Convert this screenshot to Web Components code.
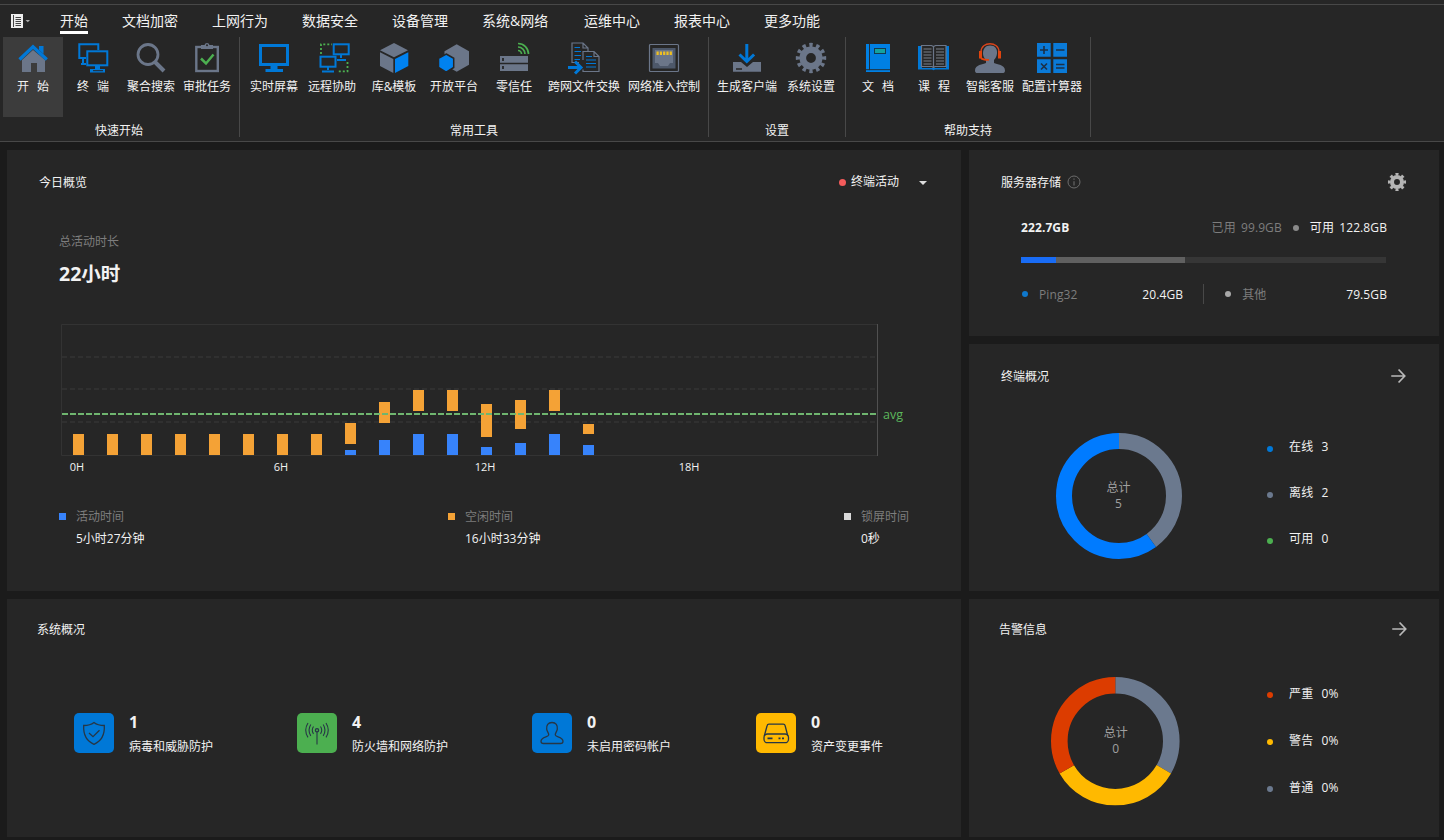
<!DOCTYPE html>
<html lang="zh-CN">
<head>
<meta charset="UTF-8">
<title>控制台</title>
<style>
    body {
        margin: 0;
        width: 1444px;
        height: 840px;
        overflow: hidden;
        background: #1b1b1b;
        color: #f2f2f2;
        font: 12px/16px "Open Sans", "Noto Sans CJK SC", sans-serif;
    }

    main {
        display: grid;
        grid-template-columns: 954px 470px;
        gap: 8px;
        padding: 8px 5px 3px 7px;
    }

    .column {
        display: flex;
        flex-direction: column;
        gap: 8px;
    }

    .stats {
        display: grid;
        grid-template-columns: 223px 235px 224px 1fr;
        padding: 76px 0 0 67px;
    }
</style>
</head>
<body>
<app-ribbon>
    <menu-tab slot="tabs" active>开始</menu-tab>
    <menu-tab slot="tabs">文档加密</menu-tab>
    <menu-tab slot="tabs">上网行为</menu-tab>
    <menu-tab slot="tabs">数据安全</menu-tab>
    <menu-tab slot="tabs">设备管理</menu-tab>
    <menu-tab slot="tabs" style="width:68px">系统&amp;网络</menu-tab>
    <menu-tab slot="tabs">运维中心</menu-tab>
    <menu-tab slot="tabs">报表中心</menu-tab>
    <menu-tab slot="tabs">更多功能</menu-tab>

    <ribbon-group label="快速开始" style="--right:4px">
        <ribbon-tool icon="home" width="60" active>开 始</ribbon-tool>
        <ribbon-tool icon="terminals" width="60">终 端</ribbon-tool>
        <ribbon-tool icon="search" width="56">聚合搜索</ribbon-tool>
        <ribbon-tool icon="approve" width="56">审批任务</ribbon-tool>
    </ribbon-group>
    <ribbon-group label="常用工具" style="--left:4px">
        <ribbon-tool icon="screen" width="60">实时屏幕</ribbon-tool>
        <ribbon-tool icon="remote" width="56">远程协助</ribbon-tool>
        <ribbon-tool icon="cube" width="68">库&amp;模板</ribbon-tool>
        <ribbon-tool icon="platform" width="52">开放平台</ribbon-tool>
        <ribbon-tool icon="trust" width="68">零信任</ribbon-tool>
        <ribbon-tool icon="exchange" width="72">跨网文件交换</ribbon-tool>
        <ribbon-tool icon="port" width="88">网络准入控制</ribbon-tool>
    </ribbon-group>
    <ribbon-group label="设置" style="--right:8px" wide>
        <ribbon-tool icon="install" width="76">生成客户端</ribbon-tool>
        <ribbon-tool icon="gear" width="52">系统设置</ribbon-tool>
    </ribbon-group>
    <ribbon-group label="帮助支持" style="--left:4px;--right:4px">
        <ribbon-tool icon="book" width="56">文 档</ribbon-tool>
        <ribbon-tool icon="course" width="56">课 程</ribbon-tool>
        <ribbon-tool icon="service" width="56">智能客服</ribbon-tool>
        <ribbon-tool icon="calc" width="68">配置计算器</ribbon-tool>
    </ribbon-group>
</app-ribbon>

<main>
    <div class="column">
        <dash-card heading="今日概览" style="--h:441px;--x:32px;--y:24px;--r:32px">
            <activity-filter slot="action">终端活动</activity-filter>
            <activity-chart></activity-chart>
        </dash-card>
        <dash-card heading="系统概况" style="--h:238px;--x:30px;--y:22px">
            <div class="stats">
                <stat-item icon="shield" color="#0078d7" value="1">病毒和威胁防护</stat-item>
                <stat-item icon="antenna" color="#4caf50" value="4">防火墙和网络防护</stat-item>
                <stat-item icon="user" color="#0078d7" value="0">未启用密码帐户</stat-item>
                <stat-item icon="disk" color="#ffb900" value="0">资产变更事件</stat-item>
            </div>
        </dash-card>
    </div>
    <div class="column">
        <dash-card heading="服务器存储" info style="--h:186px;--x:32px;--y:24px;--r:32px">
            <ui-icon slot="action" name="cog" size="20"></ui-icon>
            <storage-usage></storage-usage>
        </dash-card>
        <dash-card heading="终端概况" style="--h:247px;--x:32px;--y:24px;--r:32px">
            <ui-icon slot="action" name="arrow" size="18"></ui-icon>
            <donut-panel total="5" radius="63" hole="47" left="86.5" top="48.500" pitch="46" gap="85.5" shift="2" lift="5"
                parts='[["#6b798e",40],["#007bff",60]]'
                items='[["#0078d7","在线","3"],["#6b798e","离线","2"],["#4caf50","可用","0"]]'></donut-panel>
        </dash-card>
        <dash-card heading="告警信息" style="--h:238px;--x:30px;--y:22px">
            <ui-icon slot="action" name="arrow" size="18"></ui-icon>
            <donut-panel total="0" radius="64.3" hole="47.7" left="82.4" top="40" pitch="47" gap="87" shift="1" lift="0"
                parts='[["#6b798e",33.33],["#ffb900",33.33],["#dc3c00",33.34]]'
                items='[["#dc3c00","严重","0%"],["#ffb900","警告","0%"],["#6b798e","普通","0%"]]'></donut-panel>
        </dash-card>
    </div>
</main>

<script>
    const BLUE = '#0078d7';
    const GRAY = '#6b7689';
    const GREEN = '#4caf50';
    const DARK = '#262626';

    // 图标统一使用 32x32 画布
    const ICONS = {
        home: `<path d="M5 18 16 8l12 10v12h-8v-9h-6v9H5z" fill="${GRAY}"/><path d="M22 4h4.500v8l-4.500-4z" fill="${BLUE}"/><path d="M2.500 17.500 16 4.800l13.800 12.700" fill="none" stroke="${BLUE}" stroke-width="3.200"/>`,
        terminals: `<g fill="none" stroke="${BLUE}" stroke-width="2"><path d="M9 16H2.300V2.300h19V8"/><rect x="10.300" y="9.300" width="20" height="14"/><path d="M6 16v5m-2 1h5"/></g><path d="M18 23h5v4h5v3.500H13V27h5z" fill="${BLUE}"/><path d="M16 28.700h10" stroke="${DARK}"/>`,
        search: `<circle cx="13" cy="12.500" r="10" fill="none" stroke="${GRAY}" stroke-width="2.800"/><path d="m20 20 9 9" stroke="${GRAY}" stroke-width="4"/>`,
        approve: `<rect x="5.300" y="5" width="21.500" height="24" fill="none" stroke="${GRAY}" stroke-width="2.400"/><path d="M10 3h3.500q.5-2 2.500-2t2.500 2H22v4H10z" fill="${GRAY}"/><circle cx="16" cy="3.300" r="1" fill="${DARK}"/><path d="m10 16.500 5 5 7.500-9" fill="none" stroke="${GREEN}" stroke-width="2.500"/>`,
        screen: `<rect x="2.500" y="3.500" width="27" height="19" fill="none" stroke="${BLUE}" stroke-width="3"/><path d="M12.500 23.500h7V27H25v3H7.500v-3h5z" fill="${BLUE}"/>`,
        remote: `<g fill="none" stroke="${BLUE}" stroke-width="2"><rect x="17.700" y="2.300" width="15" height="10"/><rect x="4.500" y="14.700" width="15" height="10"/><path d="M25 12v4m-4 2h9M12 24v4m-6 1.500h12"/></g><g fill="none" stroke="${GREEN}" stroke-width="1.800" stroke-dasharray="2 2"><path d="M5 12V2.300h11M31.500 20v9.300H21"/></g>`,
        cube: `<path d="m16 1 14 7.200-14 7-14-7z" fill="${GRAY}"/><path d="M2 10.200 15.300 17v14L2 24z" fill="${GRAY}"/><path d="M30.300 10.200 17 17v14l13.300-7z" fill="#0082f0"/>`,
        platform: `<path d="m18.700 2.300 12.300 7v13.500l-12.300 7-12.200-7V9.300z" fill="${GRAY}"/><path d="m8.200 12 7.500 4.300v9.200l-7.500 4.700-7.700-4.700v-9.200z" fill="#0082f0" stroke="${DARK}" stroke-width="1.500"/>`,
        trust: `<path d="M2 14h28v6.800H2zM2 22.200h28V29H2z" fill="${GRAY}"/><path d="M5 16v3m0 5v3" stroke="${DARK}" stroke-width="1.800"/><g fill="none" stroke="${GREEN}" stroke-width="1.700"><path d="M20 1.500a10.500 10.500 0 0 1 10.500 10.500M20 5a7 7 0 0 1 7 7M20 8.500a3.500 3.500 0 0 1 3.500 3.500"/></g>`,
        exchange: `<g fill="none" stroke="${GRAY}" stroke-width="1.200"><path d="M11 20.500H4V1h11l5 5v3M15 1v5h5"/><path d="M15 18V9.500h11l5 5v15H15v-2M26 9.500v5h5"/></g><g stroke="${BLUE}" stroke-width="1.100"><path d="M6.500 5.500H12M6.500 9.500H13M6.500 13.500H13M6.500 17.500H12M18 14.500h6M18 18h10M18 21.500h10M18 25h10"/></g><path d="M0 25.500h12M7 19.500l6 6-6 6" fill="none" stroke="${BLUE}" stroke-width="3"/>`,
        port: `<rect x="1.500" y="2.500" width="29" height="27" rx="1" fill="none" stroke="${GRAY}" stroke-width="1.200"/><rect x="4.500" y="6" width="23" height="20.500" fill="#4d586a"/><path d="M7 8h18v13h-3l-2 3h-8l-2-3H7z" fill="${GRAY}"/><path d="M8.500 11.300h15.500" stroke="#f0c020" stroke-width="3.400" stroke-dasharray="2.200 1.100"/>`,
        install: `<path d="M2 20h8l6 5 6-5h8v9.700H2z" fill="${GRAY}"/><path d="M5 27h6" stroke="${DARK}" stroke-width="1.500"/><path d="M15.800 2v17M8.500 12.500l7.300 7 7.300-7" fill="none" stroke="${BLUE}" stroke-width="3"/>`,
        gear: `<circle cx="16" cy="16" r="8.200" fill="none" stroke="${GRAY}" stroke-width="6.600"/><circle cx="16" cy="16" r="13" fill="none" stroke="${GRAY}" stroke-width="4.400" pathLength="120" stroke-dasharray="5 5" stroke-dashoffset="2.500"/>`,
        book: `<path d="M4 2h24v28H4z" fill="#0080e4"/><path d="M7.500 2v25.700H28M4 27.700h4" stroke="${DARK}" stroke-width=".9" fill="none"/><rect x="12.500" y="6.500" width="11" height="5" fill="#14a3a0" stroke="#123a50"/>`,
        course: `<path d="M0 4h4v22h24V4h3v23.500H17l-1.500.8-1.500-.8H0z" fill="${BLUE}"/><path d="M3.500 3.500h10l2 1 2-1h10.500v21H17l-1.500 1-1.500-1H3.500zM15.500 5v20" fill="${DARK}" stroke="${GRAY}" stroke-width="1.200"/><path d="M5.500 7h8m-8 3h8m-8 3h8m-8 3h8m-8 3h8m-8 3h8M18 7h8m-8 3h8m-8 3h8m-8 3h8m-8 3h8m-8 3h8" stroke="#858b94" stroke-width=".9"/>`,
        service: `<path d="M16 3.500c5 0 7.500 3.500 7 8-.3 3-1.500 5-3 6.500V21c3 1.500 11 1.500 11 7.500 0 2-1 2.500-2.500 2.500h-25C2 31 1 30.500 1 28.500 1 22.500 9 22.500 12 21v-3c-2-2-3-4-3-6.500 0-4.500 2.500-8 7-8z" fill="${GRAY}"/><path d="M7 10C7-1 25-1 25 10" fill="none" stroke="#d9441b" stroke-width="1.400"/><path d="M6.500 9v7.500M25.500 9v7.500" stroke="#e0440e" stroke-width="3"/><path d="M7 16q2 2 8 1.800" fill="none" stroke="#e0440e" stroke-width="1.800"/>`,
        calc: `<path d="M1 1h13.700v13.700H1zM17.300 1H31v13.700H17.300zM1 17.300h13.700V31H1zM17.300 17.300H31V31H17.300z" fill="#0a7ad8"/><path d="M8 4v8M4 8h8M20 8h8.500M5 21.500l6 6m0-6-6 6M20 22.500h8.500M20 26h8.500" stroke="#1d3046" stroke-width="1.600"/>`,
        cog: `<circle cx="16" cy="16" r="8" fill="none" stroke="#b4b4b4" stroke-width="6.500"/><circle cx="16" cy="16" r="12.500" fill="none" stroke="#b4b4b4" stroke-width="4" pathLength="80" stroke-dasharray="5 5" stroke-dashoffset="2.500"/>`,
        arrow: `<path d="M4 16h23M17 4.500 28 16 17 27.500" fill="none" stroke="#b9b9b9" stroke-width="3"/>`,
        info: `<circle cx="16" cy="16" r="13.700" fill="none" stroke="#6e6e6e" stroke-width="2.200"/><path d="M16 8v3m0 3v10" stroke="#6e6e6e" stroke-width="2.400"/>`,
        shield: `<path d="M16 5.500c2.500 2 6 3 10.300 3 .5 9-2.300 15.300-10.300 18.800C8 23.800 5.200 17.500 5.700 8.500 10 8.500 13.500 7.500 16 5.500z"/><path d="m11 16 4 3.700 6.500-6.500"/>`,
        antenna: `<circle cx="16" cy="13.200" r="1.600"/><path d="M16 15v12.500M12.500 9.500q-2.500 3.700 0 7.400M19.500 9.500q2.500 3.700 0 7.400M9.800 7.500q-3.600 5.700 0 11.400M22.200 7.500q3.600 5.700 0 11.400M7 6q-4.600 7.200 0 14.400M25 6q4.600 7.200 0 14.400" stroke-width="1.100"/>`,
        user: `<path d="M16 5.500c4 0 5.800 3 5.300 6.700-.3 2.500-2.300 3.800-2 5.800.3 2.200 7.700 1.500 7.700 6.300 0 1.500-1 2.200-2.500 2.200h-17C6 26.500 5 25.800 5 24.300c0-4.800 7.400-4.100 7.700-6.300.3-2-1.700-3.300-2-5.800-.5-3.700 1.300-6.700 5.300-6.700z"/>`,
        disk: `<path d="M4.300 19 7 9q.4-1.800 2-1.800h14.200q1.700 0 2 1.800l2.600 10"/><rect x="4" y="17" width="24.500" height="8.700" rx="3.500"/><path d="M7.500 21.300h5M18.500 21.300h2m1.500 0h2" stroke-width="1.800"/>`
    };

    const defineElement = (name, render) => {
        customElements.define(name, class extends HTMLElement {
            constructor() {
                super();
                this.attachShadow({ mode: 'open' });
            }

            connectedCallback() {
                this.shadowRoot.innerHTML = render(this);
            }
        });
    };

    defineElement('ui-icon', el => {
        const size = el.getAttribute('size') || 32;
        return `
            <style>
                :host { display: block; width: ${size}px; height: ${size}px; flex: none; }
                svg { display: block; overflow: visible; }
            </style>
            <svg width="${size}" height="${size}" viewBox="0 0 32 32">${ICONS[el.getAttribute('name')]}</svg>
        `;
    });

    // 顶部功能区
    defineElement('app-ribbon', () => `
        <style>
            :host {
                display: block;
                box-sizing: border-box;
                height: 142px;
                padding-top: 4px;
                background: #262626;
                border-bottom: 1px solid #484848;
            }
            .tabs {
                display: flex;
                align-items: center;
                gap: 34px;
                height: 32px;
                padding-left: 11px;
                border-top: 1px solid #484848;
            }
            .app { display: flex; align-items: center; width: 15px; gap: 3px; }
            .app svg { flex: none; }
            .groups { display: flex; padding: 0 0 0 3px; }
        </style>
        <div class="tabs">
            <div class="app">
                <svg width="20" height="14" viewBox="0 0 20 14">
                    <path d="M0 0h12v14H0z" fill="#eee"/>
                    <path d="M2.500 1v12M4.500 3.500H10m-5.500 2H10m-5.500 2H10m-5.500 2H10m-5.500 2H10" stroke="#444"/>
                    <path d="M14.500 6h4.500l-2.200 2.300z" fill="#aaa"/>
                </svg>
            </div>
            <slot name="tabs"></slot>
        </div>
        <div class="groups"><slot></slot></div>
    `);

    defineElement('menu-tab', el => `
        <style>
            :host {
                display: block;
                box-sizing: border-box;
                height: 24px;
                margin-top: 2px;
                font-size: 14px;
                line-height: 21px;
                white-space: nowrap;
                border-bottom: 3px solid ${el.hasAttribute('active') ? '#fff' : 'transparent'};
            }
        </style>
        <slot></slot>
    `);

    defineElement('ribbon-group', el => `
        <style>
            :host {
                display: flex;
                flex-direction: column;
                height: 100px;
                border-right: 1px solid #484848;
            }
            .tools { display: flex; flex: none; height: 80px; padding: 0 var(--right, 0px) 0 var(--left, 0px); }
            .label {
                padding-right: ${el.hasAttribute('wide') ? 0 : 'calc(var(--right, 0px) - var(--left, 0px))'};
                margin-top: 6px;
                text-align: center;
            }
        </style>
        <div class="tools"><slot></slot></div>
        <div class="label">${el.getAttribute('label')}</div>
    `);

    defineElement('ribbon-tool', el => `
        <style>
            :host {
                display: flex;
                flex-direction: column;
                align-items: center;
                gap: 5px;
                box-sizing: border-box;
                width: ${el.getAttribute('width')}px;
                padding-top: 5px;
                background: ${el.hasAttribute('active') ? '#3c3c3c' : 'none'};
            }
            span { white-space: nowrap; word-spacing: 5px; }
        </style>
        <ui-icon name="${el.getAttribute('icon')}"></ui-icon>
        <span><slot></slot></span>
    `);

    // 面板卡片
    defineElement('dash-card', el => `
        <style>
            :host { display: block; height: var(--h); background: #262626; }
            header {
                display: flex;
                align-items: center;
                gap: 6px;
                height: 16px;
                padding: var(--y) var(--r, 31px) 0 var(--x);
            }
            .title { margin-top: 2px; }
            .action { margin-left: auto; }
        </style>
        <header>
            <span class="title">${el.getAttribute('heading')}</span>
            ${el.hasAttribute('info') ? '<ui-icon name="info" size="14"></ui-icon>' : ''}
            <div class="action"><slot name="action"></slot></div>
        </header>
        <slot></slot>
    `);

    defineElement('activity-filter', () => `
        <style>
            :host { display: flex; align-items: center; padding-right: 2px; }
            i { width: 7px; height: 7px; margin-right: 5px; border-radius: 50%; background: #f45b5b; }
            svg { margin: 2px 0 0 20px; }
        </style>
        <i></i><slot></slot>
        <svg width="8" height="4"><path d="M0 0h8L4 4z" fill="#ddd"/></svg>
    `);

    // 每小时数据：[活动顶部, 空闲顶部, 空闲底部]
    const HOURS = [
        ...Array(8).fill([132, 111, 132]),
        [127, 100, 121], [117, 79, 100], [111, 67, 88], [111, 67, 88],
        [124, 81, 114], [120, 77, 106], [111, 67, 88], [122, 101, 111]
    ];

    defineElement('activity-chart', () => {
        const bars = HOURS.map(([active, top, bottom], i) => {
            const x = 13 + i * 34;
            return `<rect x="${x}" y="${top}" width="11" height="${bottom - top}" fill="#f4a236"/>
                <rect x="${x}" y="${active}" width="11" height="${132 - active}" fill="#3783fb"/>`;
        }).join('');
        const legend = [
            ['#3783fb', '活动时间', '5小时27分钟'],
            ['#f4a236', '空闲时间', '16小时33分钟'],
            ['#d9d9d9', '锁屏时间', '0秒']
        ].map(([color, name, value]) => `
            <div class="item">
                <i style="background:${color}"></i>
                <div><div class="muted">${name}</div><div class="value">${value}</div></div>
            </div>`).join('');
        return `
            <style>
                :host { display: block; padding: 44px 40px 0 52px; }
                .muted { color: #7d7d7d; }
                .total { margin: 12px 0 37px; font-size: 19.500px; line-height: 24px; font-weight: 700; }
                svg { display: block; margin-left: 1px; overflow: visible; }
                text { font-size: 11px; fill: #f2f2f2; text-anchor: middle; }
                .legend { display: grid; grid-template-columns: 389px 396px 1fr; margin-top: 30px; }
                .item { display: flex; gap: 10px; }
                .value { margin-top: 6px; }
                i { width: 7px; height: 7px; margin-top: 4px; }
            </style>
            <div class="muted">总活动时长</div>
            <div class="total">22小时</div>
            <svg width="850" height="156">
                <g fill="none" stroke="#333">
                    <path d="M817 1.500H1.500v131H817"/>
                    <path d="M2 34h814M2 66h814M2 99h814" stroke-width="2" stroke="#303030" stroke-dasharray="5 3"/>
                    <path d="M817.500 1v132" stroke="#505050"/>
                </g>
                ${bars}
                <path d="M2 91h814" stroke="#6fb56f" stroke-width="2" stroke-dasharray="6 2"/>
                <text x="17" y="148">0H</text>
                <text x="221" y="148">6H</text>
                <text x="425" y="148">12H</text>
                <text x="629" y="148">18H</text>
                <text x="823" y="96" style="font-size:12.500px;fill:#5cb85c;text-anchor:start">avg</text>
            </svg>
            <div class="legend">${legend}</div>
        `;
    });

    defineElement('storage-usage', () => `
        <style>
            :host { display: block; width: 366px; padding: 30px 0 0 52px; }
            .row { display: flex; align-items: center; height: 16px; white-space: nowrap; word-spacing: 2px; letter-spacing: .1px; }
            .muted { color: #7d7d7d; }
            .push { margin-left: auto; }
            i { width: 6px; height: 6px; border-radius: 50%; background: #8a8a8a; }
            .bar { display: flex; width: 365px; height: 6px; margin: 21px 0 23px; background: #363636; }
            .ping { width: 35px; background: #196cf5; }
            .other { width: 129px; background: #606060; }
            .divider { width: 1px; height: 20px; margin: 0 21px 0 20px; background: #484848; }
            .detail span { padding-top: 2px; }
        </style>
        <div class="row">
            <b>222.7GB</b>
            <span class="muted push">已用 99.9GB</span>
            <i style="margin:0 11px"></i>
            <span>可用 122.8GB</span>
        </div>
        <div class="bar"><div class="ping"></div><div class="other"></div></div>
        <div class="row detail">
            <i style="margin:0 11px 0 1px;background:#0f78cc"></i>
            <span class="muted">Ping32</span>
            <span style="margin-left:auto">20.4GB</span>
            <div class="divider"></div>
            <i style="margin-right:11px;background:#a8a8a8"></i>
            <span class="muted" style="width:104px">其他</span>
            <span>79.5GB</span>
        </div>
    `);

    // 环形图和右侧图例
    defineElement('donut-panel', el => {
        const num = name => Number(el.getAttribute(name));
        const outer = num('radius');
        const inner = num('hole');
        const size = outer * 2;
        const r = (outer + inner) / 2;
        let start = 0;
        const arcs = JSON.parse(el.getAttribute('parts')).map(([color, share]) => {
            const arc = `<circle cx="${outer}" cy="${outer}" r="${r}" fill="none" stroke="${color}" stroke-width="${outer - inner}"
                pathLength="100" stroke-dasharray="${share} ${100 - share}" stroke-dashoffset="${-start}"/>`;
            start += share;
            return arc;
        }).join('');
        const items = JSON.parse(el.getAttribute('items')).map(([color, name, value]) => `
            <div class="item"><i style="background:${color}"></i><span>${name}</span><span>${value}</span></div>`).join('');
        return `
            <style>
                :host {
                    display: flex;
                    align-items: center;
                    gap: ${num('gap')}px;
                    padding: ${num('top')}px 0 0 ${num('left')}px;
                }
                .donut { display: grid; place-items: center; width: ${size}px; height: ${size}px; }
                .donut > * { grid-area: 1 / 1; }
                svg { transform: rotate(-90deg); }
                .total { color: #a0a0a0; text-align: center; }
                .list { display: flex; flex-direction: column; gap: ${num('pitch') - 16}px; margin-top: -${num('lift')}px; }
                .item { display: flex; align-items: center; gap: 8px; letter-spacing: .2px; }
                i { width: 6px; height: 6px; margin: ${num('shift') * 2}px 8px 0 0; border-radius: 50%; }
            </style>
            <div class="donut">
                <svg width="${size}" height="${size}">${arcs}</svg>
                <div class="total">总计<br>${el.getAttribute('total')}</div>
            </div>
            <div class="list">${items}</div>
        `;
    });

    defineElement('stat-item', el => `
        <style>
            :host { display: flex; gap: 15px; }
            .badge {
                display: grid;
                place-items: center;
                width: 40px;
                height: 40px;
                border-radius: 5px;
                background: ${el.getAttribute('color')};
            }
            svg { fill: none; stroke: #263746; stroke-width: 1.300; }
            .value { margin-bottom: 8px; font-size: 16px; line-height: 18px; font-weight: 700; }
        </style>
        <div class="badge"><svg width="32" height="32" viewBox="0 0 32 32">${ICONS[el.getAttribute('icon')]}</svg></div>
        <div><div class="value">${el.getAttribute('value')}</div><slot></slot></div>
    `);
</script>
</body>
</html>
